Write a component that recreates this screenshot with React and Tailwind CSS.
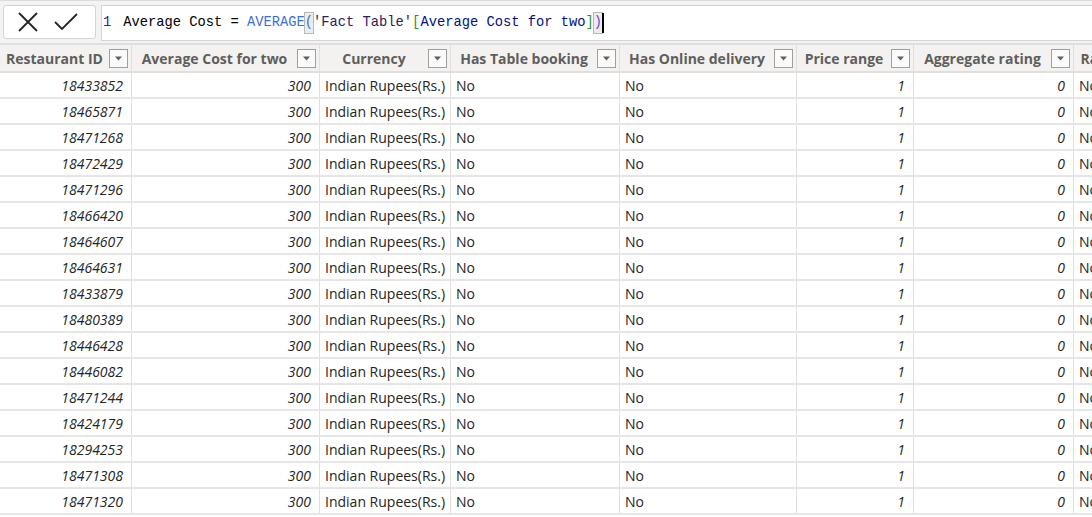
import React from 'react';

const ids = [
  '18433852', '18465871', '18471268', '18472429', '18471296', '18466420',
  '18464607', '18464631', '18433879', '18480389', '18446428', '18446082',
  '18471244', '18424179', '18294253', '18471308', '18471320',
];

const columns = [
  { label: 'Restaurant ID', width: 'w-[132px]' },
  { label: 'Average Cost for two', width: 'w-[188px]' },
  { label: 'Currency', width: 'w-[131px]' },
  { label: 'Has Table booking', width: 'w-[169px]' },
  { label: 'Has Online delivery', width: 'w-[177px]' },
  { label: 'Price range', width: 'w-[117px]' },
  { label: 'Aggregate rating', width: 'w-[160px]' },
  { label: 'Rating color', width: 'w-[120px]' },
];

const FilterButton = () => (
  <div className="w-[19px] h-[19px] shrink-0 border border-[#a19f9d] bg-[#fafafa] flex items-center justify-center mr-[3px]">
    <svg width="9" height="5" viewBox="0 0 9 5">
      <path d="M1 0.5 L8 0.5 L4.5 4.5 Z" fill="#605e5c" />
    </svg>
  </div>
);

const HeaderCell = ({ label, width }) => (
  <div className={`${width} shrink-0 h-full flex items-center border-r border-[#e1dfdd] overflow-hidden`}>
    <span className="flex-1 text-center font-bold text-[#605e5c] whitespace-nowrap overflow-hidden">{label}</span>
    <FilterButton />
  </div>
);

const NumCell = ({ value, width }) => (
  <div className={`${width} shrink-0 h-full flex items-center justify-end pr-[8px] italic border-r border-[#e1dfdd]`}>
    {value}
  </div>
);

const TextCell = ({ value, width }) => (
  <div className={`${width} shrink-0 h-full flex items-center pl-[5px] border-r border-[#e1dfdd] whitespace-nowrap overflow-hidden`}>
    {value}
  </div>
);

export default function App() {
  return (
    <div className="w-[1092px] h-[517px] overflow-hidden bg-white text-[#252423]" style={{ fontFamily: '"Segoe UI", "Open Sans", sans-serif' }}>
      {/* formula bar */}
      <div className="h-[43px] bg-[#f3f3f3] border-t border-[#dcdcdc] flex items-start pt-[4px]">
        <div className="ml-[3px] w-[93px] h-[34px] bg-white border border-[#d4d4d4] rounded-[3px] flex items-center">
          <svg width="22" height="22" viewBox="0 0 22 22" className="ml-[13px]">
            <path d="M2 2 L20 20 M20 2 L2 20" stroke="#252423" strokeWidth="1.8" fill="none" />
          </svg>
          <svg width="24" height="18" viewBox="0 0 24 18" className="ml-[15px]">
            <path d="M1 9 L8 16 L23 1" stroke="#252423" strokeWidth="1.8" fill="none" />
          </svg>
        </div>
        <div
          className="ml-[5px] flex-1 h-[36px] bg-white border border-[#d4d4d4] border-r-0 flex items-center pl-[1px] text-[13.75px] whitespace-pre"
          style={{ fontFamily: '"Liberation Mono", "DejaVu Sans Mono", monospace' }}
        >
          <span className="text-[#2b2b8c]">1</span>
          <span className="ml-[12px] text-black">Average Cost = </span>
          <span className="text-[#3b6fd8]">AVERAGE</span>
          <span className="text-[#3b6fd8] bg-[#e8eee8] outline outline-1 outline-[#b8b8b8]">(</span>
          <span className="text-[#2e2060]">'Fact Table'</span>
          <span className="text-[#319331]">[</span>
          <span className="text-[#001080]">Average Cost for two</span>
          <span className="text-[#319331]">]</span>
          <span className="text-[#7b3fd8] bg-[#e8eee8] outline outline-1 outline-[#b8b8b8]">)</span>
          <span className="w-[2px] h-[20px] bg-black" />
        </div>
      </div>

      {/* header */}
      <div className="h-[30px] bg-[#f3f2f1] border-t-2 border-b-2 border-[#e1dfdd] flex text-[14px]">
        {columns.map((c) => (
          <HeaderCell key={c.label} label={c.label} width={c.width} />
        ))}
      </div>

      {/* rows */}
      <div className="text-[14px]">
        {ids.map((id) => (
          <div key={id} className="h-[26px] flex border-b-2 border-[#e6e6e6]">
            <NumCell value={id} width="w-[132px]" />
            <NumCell value="300" width="w-[188px]" />
            <TextCell value="Indian Rupees(Rs.)" width="w-[131px]" />
            <TextCell value="No" width="w-[169px]" />
            <TextCell value="No" width="w-[177px]" />
            <NumCell value="1" width="w-[117px]" />
            <NumCell value="0" width="w-[160px]" />
            <TextCell value="No" width="w-[120px]" />
          </div>
        ))}
      </div>
    </div>
  );
}
